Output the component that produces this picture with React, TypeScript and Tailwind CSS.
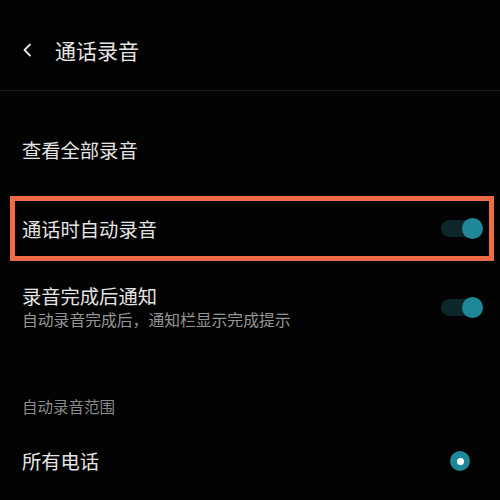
import React from 'react';

const font = { fontFamily: '"Noto Sans CJK SC", "Noto Sans", sans-serif' };

const Toggle = () => (
  <div className="relative h-[21px] w-[42px] shrink-0">
    <div className="absolute inset-x-0 top-[2px] h-[17px] rounded-full bg-[#0d2629]" />
    <div className="absolute right-0 top-0 h-[21px] w-[21px] rounded-full bg-[#1f8898]" />
  </div>
);

const Radio = () => (
  <div className="flex h-[20px] w-[20px] shrink-0 items-center justify-center rounded-full bg-[#1f8898]">
    <div className="h-[7px] w-[7px] rounded-full bg-white" />
  </div>
);

export default function App() {
  return (
    <div className="h-[500px] w-[500px] overflow-hidden bg-[#030303] text-[#e4e4e4]" style={font}>
      <div className="flex h-[91px] items-start border-b border-[#1b1b1b] pt-[36px]">
        <svg className="ml-[22px] mt-[7px]" width="10" height="14" viewBox="0 0 10 14" fill="none">
          <path d="M8 1.5L2.5 7L8 12.5" stroke="#e4e4e4" strokeWidth="1.8" strokeLinecap="round" strokeLinejoin="round" />
        </svg>
        <span className="ml-[23px] text-[21px] leading-[28px]">通话录音</span>
      </div>

      <div className="mt-[45px] pl-[22px] text-[19.3px] leading-[28px]">查看全部录音</div>

      <div className="ml-[10px] mt-[32px] flex h-[65px] w-[484px] items-center justify-between border-[5px] border-[#ef6b45] pl-[7px] pr-[6px]">
        <span className="text-[19.3px] leading-[28px]">通话时自动录音</span>
        <Toggle />
      </div>

      <div className="mt-[22px] flex items-center justify-between pl-[22px] pr-[17px]">
        <div>
          <div className="text-[19.3px] leading-[26px]">录音完成后通知</div>
          <div className="text-[15.8px] leading-[22px] text-[#959595]">自动录音完成后，通知栏显示完成提示</div>
        </div>
        <Toggle />
      </div>

      <div className="mt-[64px] pl-[22px] text-[15.5px] leading-[22px] text-[#8a8a8a]">自动录音范围</div>

      <div className="mt-[30px] flex items-center justify-between pl-[22px] pr-[30px]">
        <span className="text-[19.3px] leading-[28px]">所有电话</span>
        <Radio />
      </div>
    </div>
  );
}
